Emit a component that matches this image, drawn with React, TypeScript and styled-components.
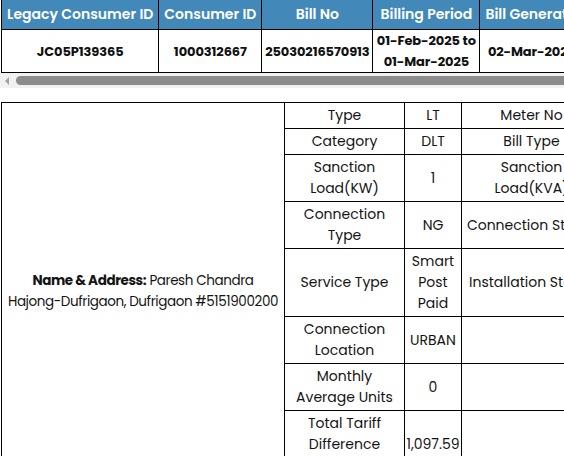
import React from 'react';
import styled, { createGlobalStyle } from 'styled-components';

const GlobalStyle = createGlobalStyle`
  html, body {
    margin: 0;
    padding: 0;
    background: #ffffff;
  }
  body {
    font-family: 'Poppins', 'Inter', 'Noto Sans', sans-serif;
    color: #111111;
  }
`;

const Page = styled.div`
  width: 564px;
  overflow: hidden;
  padding-left: 1px;
  box-sizing: border-box;
`;

const ScrollArea = styled.div`
  overflow: hidden;
  width: 100%;
`;

const SummaryTable = styled.table`
  border-collapse: collapse;
  table-layout: fixed;
  width: max-content;
`;

const HeadCell = styled.th`
  background: #4289b9;
  color: #ffffff;
  font-weight: 600;
  font-size: 14px;
  line-height: 21px;
  padding: 4px 5px;
  border: 1px solid #000000;
  border-top: 0;
  white-space: nowrap;
  text-align: center;
`;

const DataCell = styled.td`
  font-weight: 700;
  font-size: 13px;
  letter-spacing: -0.1px;
  line-height: 21px;
  padding: 0 1px;
  border: 1px solid #000000;
  text-align: center;
  vertical-align: middle;
  height: 42px;
`;

const ScrollTrack = styled.div`
  display: flex;
  align-items: center;
  gap: 7px;
  height: 15px;
  margin-left: -1px;
  background: #f1f1f1;
`;

const ScrollArrow = styled.div`
  width: 0;
  height: 0;
  margin-left: 5px;
  border-top: 4px solid transparent;
  border-bottom: 4px solid transparent;
  border-right: 4px solid #a3a3a3;
`;

const ScrollThumb = styled.div`
  flex: 1;
  height: 9px;
  background: #8c8c8c;
  border-radius: 5px 0 0 5px;
`;

const DetailTable = styled.table`
  margin-top: 14px;
  border-collapse: collapse;
  table-layout: fixed;
  width: max-content;
`;

const Cell = styled.td`
  font-size: 14px;
  font-weight: 400;
  line-height: 21px;
  padding: 2px 1px;
  border: 1px solid #000000;
  text-align: center;
  vertical-align: middle;
  color: #141414;
`;

const AddressCell = styled(Cell)`
  font-size: 13.5px;
  letter-spacing: -0.4px;
  white-space: nowrap;
`;

const Strong = styled.strong`
  font-weight: 700;
`;

const headers = [
  'Legacy Consumer ID',
  'Consumer ID',
  'Bill No',
  'Billing Period',
  'Bill Generation Date',
  'Due Date',
];

const headWidths = [157, 103, 111, 107, 152, 110];

const rows: [string, string, string, string][] = [
  ['Type', 'LT', 'Meter No', '18302764'],
  ['Category', 'DLT', 'Bill Type', 'Normal'],
  ['Sanction Load(KW)', '1', 'Sanction Load(KVA)', '0'],
  ['Connection Type', 'NG', 'Connection Status', 'Connected'],
  ['Service Type', 'Smart Post Paid', 'Installation Status', 'Installed'],
  ['Connection Location', 'URBAN', '', ''],
  ['Monthly Average Units', '0', '', ''],
  ['Total Tariff Difference Amount', '1,097.59', '', ''],
];

const detailWidths = [283, 120, 57, 140, 120];

export default function App() {
  return (
    <Page>
      <GlobalStyle />
      <ScrollArea>
        <SummaryTable>
          <colgroup>
            {headWidths.map((w, i) => (
              <col key={i} style={{ width: w }} />
            ))}
          </colgroup>
          <thead>
            <tr>
              {headers.map(h => (
                <HeadCell key={h}>{h}</HeadCell>
              ))}
            </tr>
          </thead>
          <tbody>
            <tr>
              <DataCell>JC05P139365</DataCell>
              <DataCell>1000312667</DataCell>
              <DataCell>25030216570913</DataCell>
              <DataCell>01-Feb-2025 to 01-Mar-2025</DataCell>
              <DataCell>02-Mar-2025 14:23:11</DataCell>
              <DataCell>17-Mar-2025</DataCell>
            </tr>
          </tbody>
        </SummaryTable>
      </ScrollArea>
      <ScrollTrack>
        <ScrollArrow />
        <ScrollThumb />
      </ScrollTrack>

      <DetailTable>
        <colgroup>
          {detailWidths.map((w, i) => (
            <col key={i} style={{ width: w }} />
          ))}
        </colgroup>
        <tbody>
          {rows.map((r, i) => (
            <tr key={r[0]}>
              {i === 0 && (
                <AddressCell rowSpan={rows.length}>
                  <Strong>Name &amp; Address:</Strong> Paresh Chandra
                  <br />
                  Hajong-Dufrigaon, Dufrigaon #5151900200
                </AddressCell>
              )}
              <Cell>{r[0]}</Cell>
              <Cell>{r[1]}</Cell>
              <Cell>{r[2]}</Cell>
              <Cell>{r[3]}</Cell>
            </tr>
          ))}
        </tbody>
      </DetailTable>
    </Page>
  );
}
